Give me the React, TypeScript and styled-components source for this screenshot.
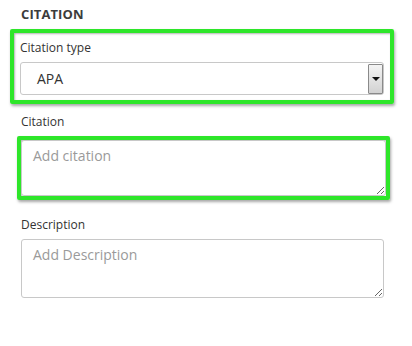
import React from 'react';
import styled, { createGlobalStyle } from 'styled-components';

const GlobalStyle = createGlobalStyle`
  html, body {
    margin: 0;
    padding: 0;
    background: #ffffff;
    font-family: "Open Sans", "Noto Sans", sans-serif;
  }
`;

const Page = styled.div`
  width: 412px;
  height: 346px;
  padding-top: 5px;
  box-sizing: border-box;
  display: flex;
  flex-direction: column;
`;

const Heading = styled.h2`
  margin: 0 0 6px 21px;
  font-size: 13px;
  line-height: 18px;
  font-weight: 700;
  color: #3c3c3c;
  letter-spacing: 0.1px;
`;

const Highlight = styled.div<{ $inset: number; $width: number; $pad: string }>`
  margin-left: ${p => p.$inset}px;
  width: ${p => p.$width}px;
  box-sizing: border-box;
  border: 4px solid #2ee62a;
  border-radius: 2px;
  padding: ${p => p.$pad};
  box-shadow: 1px 2px 3px rgba(0, 0, 0, 0.35), inset 1px 1px 2px rgba(0, 0, 0, 0.3);
  display: flex;
  flex-direction: column;
`;

const Field = styled.div<{ $inset?: number; $top?: number }>`
  margin-left: ${p => p.$inset ?? 0}px;
  margin-top: ${p => p.$top ?? 0}px;
  display: flex;
  flex-direction: column;
`;

const Label = styled.label`
  font-size: 12px;
  line-height: 16px;
  color: #333333;
  margin-bottom: 6px;
`;

const SelectBox = styled.div`
  height: 33px;
  box-sizing: border-box;
  border: 1px solid #c8c8c8;
  border-radius: 3px;
  background: #ffffff;
  display: flex;
  align-items: center;
  padding-left: 16px;
  font-size: 14px;
  color: #333333;
`;

const SelectValue = styled.span`
  flex: 1;
`;

const ArrowButton = styled.div`
  width: 15px;
  height: 30px;
  box-sizing: border-box;
  border: 1px solid #8a8a8a;
  border-radius: 1px;
  background: linear-gradient(#f4f4f4, #d2d2d2);
  display: flex;
  align-items: center;
  justify-content: center;
`;

const Arrow = styled.span`
  width: 0;
  height: 0;
  border-left: 4px solid transparent;
  border-right: 4px solid transparent;
  border-top: 4px solid #111111;
`;

const TextArea = styled.textarea<{ $height: number; $width: number }>`
  display: block;
  width: ${p => p.$width}px;
  height: ${p => p.$height}px;
  box-sizing: border-box;
  border: 1px solid #c8c8c8;
  border-radius: 3px;
  padding: 6px 11px;
  font-family: "Open Sans", "Noto Sans", sans-serif;
  font-size: 14px;
  line-height: 18px;
  color: #333333;
  resize: vertical;
  outline: none;

  &::placeholder {
    color: #9a9a9a;
  }
`;

const App: React.FC = () => (
  <>
    <GlobalStyle />
    <Page>
      <Heading>CITATION</Heading>

      <Highlight $inset={10} $width={384} $pad="7px 6px 5px 6px">
        <Label>Citation type</Label>
        <SelectBox>
          <SelectValue>APA</SelectValue>
          <ArrowButton>
            <Arrow />
          </ArrowButton>
        </SelectBox>
      </Highlight>

      <Field $inset={21} $top={10}>
        <Label>Citation</Label>
      </Field>
      <Highlight $inset={17} $width={373} $pad="0">
        <TextArea $width={365} $height={56} placeholder="Add citation" />
      </Highlight>

      <Field $inset={21} $top={17}>
        <Label>Description</Label>
        <TextArea $width={363} $height={59} placeholder="Add Description" />
      </Field>
    </Page>
  </>
);

export default App;
